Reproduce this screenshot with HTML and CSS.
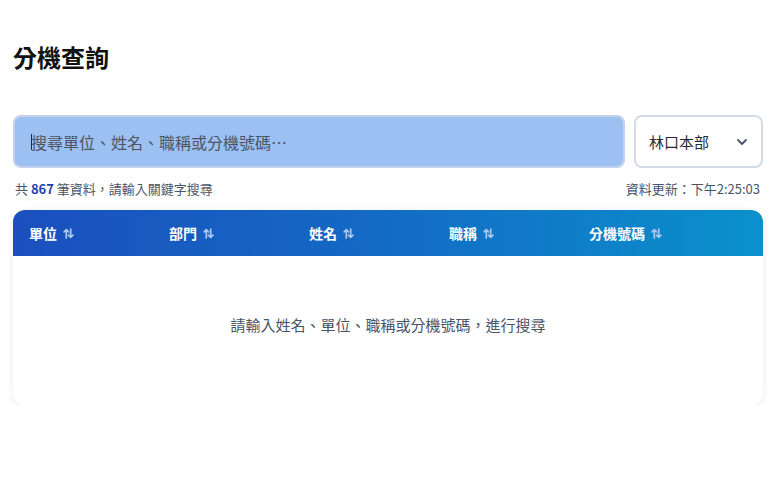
FILE: index.html
```html
<!DOCTYPE html>
<html lang="zh-Hant">
<head>
  <meta charset="UTF-8" />
  <meta name="viewport" content="width=device-width, initial-scale=1.0"/>
  <title>分機查詢</title>
  <link rel="stylesheet" href="styles.css">
</head>
<body>
  <div class="container">
    <h1 class="page-title">分機查詢</h1>

    <div class="search-row">
      <div class="search-box">
        <span class="caret"></span>
        <input type="text" id="searchInput" class="search-input" placeholder="搜尋單位、姓名、職稱或分機號碼⋯">
      </div>
      <div class="site-select">
        <span>林口本部</span>
        <svg class="chevron" width="14" height="14" viewBox="0 0 14 14"><path d="M3 5l4 4 4-4" fill="none" stroke="#475569" stroke-width="1.8" stroke-linecap="round" stroke-linejoin="round"/></svg>
      </div>
    </div>

    <div class="meta-row">
      <span>共 <b class="count">867</b> 筆資料，請輸入關鍵字搜尋</span>
      <span>資料更新：下午2:25:03</span>
    </div>

    <div class="table-card">
      <div class="table-head">
        <div class="th">單位 <svg class="sort" viewBox="0 0 10 10"><path d="M3 9V1.5M1 3.5l2-2 2 2M7 1v7.5M5 6.5l2 2 2-2"/></svg></div>
        <div class="th">部門 <svg class="sort" viewBox="0 0 10 10"><path d="M3 9V1.5M1 3.5l2-2 2 2M7 1v7.5M5 6.5l2 2 2-2"/></svg></div>
        <div class="th">姓名 <svg class="sort" viewBox="0 0 10 10"><path d="M3 9V1.5M1 3.5l2-2 2 2M7 1v7.5M5 6.5l2 2 2-2"/></svg></div>
        <div class="th">職稱 <svg class="sort" viewBox="0 0 10 10"><path d="M3 9V1.5M1 3.5l2-2 2 2M7 1v7.5M5 6.5l2 2 2-2"/></svg></div>
        <div class="th">分機號碼 <svg class="sort" viewBox="0 0 10 10"><path d="M3 9V1.5M1 3.5l2-2 2 2M7 1v7.5M5 6.5l2 2 2-2"/></svg></div>
      </div>
      <div class="table-empty">請輸入姓名、單位、職稱或分機號碼，進行搜尋</div>
    </div>
  </div>
</body>
</html>
```

FILE: styles.css
```css
body {
  margin: 0;
  font-family: "Noto Sans CJK TC", "Noto Sans", sans-serif;
  color: #111;
  background: #fff;
}
.container {
  width: 750px;
  padding: 0 13px;
}
.page-title {
  margin: 0;
  padding-top: 38px;
  font-size: 24px;
  line-height: 38px;
  font-weight: 700;
}
.search-row {
  display: flex;
  gap: 9px;
  margin-top: 39px;
}
.search-box {
  position: relative;
  flex: 1;
  height: 53px;
  box-sizing: border-box;
  background: #9dc0f2;
  border: 2px solid #c3d2e8;
  border-radius: 8px;
  display: flex;
  align-items: center;
}
.caret {
  position: absolute;
  left: 16px;
  top: 17px;
  width: 1px;
  height: 16px;
  background: #1f2937;
}
.search-input {
  flex: 1;
  border: none;
  outline: none;
  background: transparent;
  padding: 0 0 0 16px;
  font-family: inherit;
  font-size: 16px;
  color: #1f2937;
  caret-color: transparent;
}
.search-input::placeholder {
  color: #4b5563;
}
.site-select {
  width: 129px;
  height: 53px;
  box-sizing: border-box;
  border: 2px solid #d3dbe6;
  border-radius: 8px;
  display: flex;
  align-items: center;
  justify-content: space-between;
  padding: 0 12px 0 13px;
  font-size: 15px;
  color: #1f2937;
}
.meta-row {
  display: flex;
  justify-content: space-between;
  margin-top: 12px;
  padding: 0 3px 0 2px;
  font-size: 13px;
  line-height: 18px;
  color: #475569;
}
.count {
  color: #1e40af;
}
.table-card {
  margin-top: 12px;
  border-radius: 12px;
  overflow: hidden;
  background: #fff;
  box-shadow: 0 2px 10px rgba(0,0,0,0.08);
}
.table-head {
  display: grid;
  grid-template-columns: repeat(5, 140px);
  height: 46px;
  align-items: center;
  padding-left: 16px;
  background: linear-gradient(90deg, #1b4fbe 0%, #1468c4 45%, #0a91cc 100%);
}
.th {
  display: flex;
  align-items: center;
  gap: 6px;
  color: #fff;
  font-size: 14px;
  font-weight: 700;
}
.sort {
  width: 11px;
  height: 11px;
  fill: none;
  stroke: #a8c6ef;
  stroke-width: 1.6;
  stroke-linecap: round;
  stroke-linejoin: round;
}
.table-empty {
  padding: 57px 0 68px;
  line-height: 24px;
  text-align: center;
  font-size: 15px;
  color: #475569;
}
```
